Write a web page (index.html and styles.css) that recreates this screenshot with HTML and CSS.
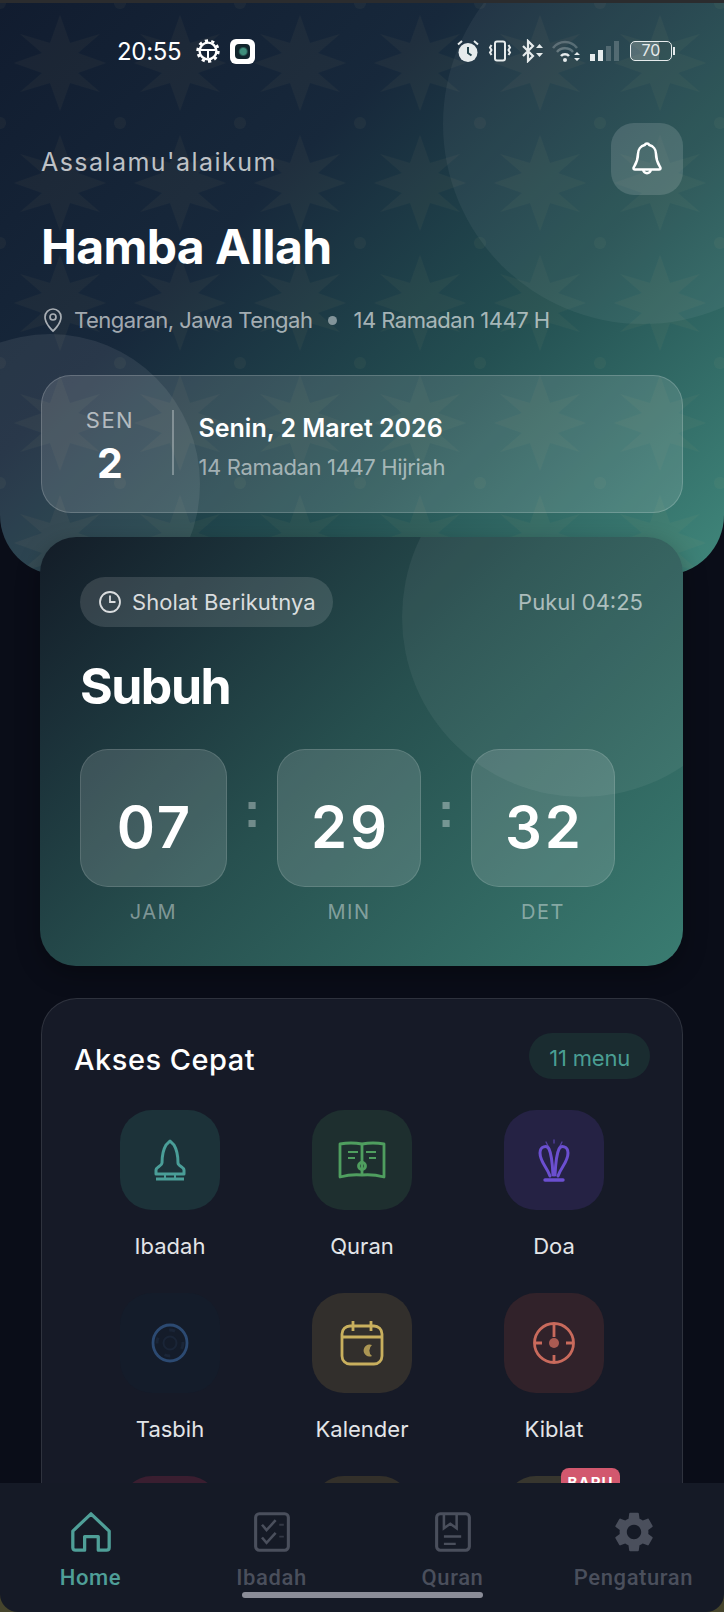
FILE: index.html
```html
<!DOCTYPE html>
<html lang="id">
<head>
  <meta charset="UTF-8">
  <meta name="viewport" content="width=device-width, initial-scale=1.0">
  <title>Hamba Allah</title>
  <link rel="stylesheet" href="styles.css">
</head>
<body>
  <div class="phone">
    <div class="top-strip"></div>

    <header class="header">
      <!-- star pattern + big soft circles -->
      <svg class="pattern" width="724" height="572" aria-hidden="true">
        <defs>
          <pattern id="stars" width="120" height="120" patternUnits="userSpaceOnUse">
            <path transform="translate(60 60)" d="M0 -48L10 -20L40 -29L18 -10L46 0L18 10L40 29L10 20L0 48L-10 20L-40 29L-18 10L-46 0L-18 -10L-40 -29L-10 -20Z"/>
            <circle cx="0" cy="0" r="6"/><circle cx="120" cy="0" r="6"/>
            <circle cx="0" cy="120" r="6"/><circle cx="120" cy="120" r="6"/>
          </pattern>
        </defs>
        <rect width="724" height="572" fill="url(#stars)"/>
      </svg>
      <div class="blob blob-right"></div>
      <div class="blob blob-left"></div>

      <div class="status-bar">
        <div class="status-left">
          <span class="status-time">20:55</span>
          <svg class="gear-face" width="24" height="24" viewBox="0 0 24 24" fill="none" stroke="#fff">
            <circle cx="12" cy="12" r="8.4" stroke-width="2.4"/>
            <circle cx="12" cy="12" r="10.4" stroke-width="2.6" stroke-dasharray="3.2 3.3"/>
            <path d="M5 11H19M12 11V19" stroke-width="2"/>
          </svg>
          <span class="app-badge"><span class="app-badge-inner"></span></span>
        </div>
        <div class="status-right">
          <svg width="24" height="24" viewBox="0 0 24 24">
            <circle cx="12" cy="13.5" r="9.5" fill="#e6ebec"/>
            <path d="M12 8V14L15.5 16.5" stroke="#24434b" stroke-width="2" fill="none"/>
            <path d="M2 5.5L6 2M22 5.5L18 2" stroke="#e6ebec" stroke-width="2"/>
          </svg>
          <svg width="24" height="22" viewBox="0 0 24 22" fill="none" stroke="#e6ebec" stroke-width="2">
            <rect x="7" y="1.5" width="10" height="19" rx="2"/>
            <path d="M3.5 5L2 7.500L3.500 10L2 12.500L3.500 15M20.500 5L22 7.500L20.500 10L22 12.500L20.500 15"/>
          </svg>
          <svg width="24" height="24" viewBox="0 0 24 24" fill="none" stroke="#e6ebec" stroke-width="2.200">
            <path d="M3 7L13 17L8 22V2L13 7L3 17"/>
            <path d="M16 9L19.500 5L23 9ZM16 14L19.500 18L23 14Z" fill="#e6ebec" stroke="none"/>
          </svg>
          <svg class="wifi" width="30" height="22" viewBox="0 0 30 22" fill="none">
            <path d="M1 8C7 0 19 0 25 8" stroke="#e6ebec" stroke-opacity=".25" stroke-width="2.500"/>
            <path d="M5 12C9 7 17 7 21 12" stroke="#e6ebec" stroke-opacity=".3" stroke-width="2.500"/>
            <path d="M9 16C11 13.500 15 13.500 17 16" stroke="#e6ebec" stroke-width="2.500"/>
            <circle cx="13" cy="20" r="2" fill="#e6ebec"/>
            <path d="M22 15L25 12L28 15ZM22 18L25 21L28 18Z" fill="#e6ebec"/>
          </svg>
          <div class="signal">
            <span class="bar bar-1"></span><span class="bar bar-2"></span>
            <span class="bar bar-3 off"></span><span class="bar bar-4 off"></span>
          </div>
          <div class="battery"><span class="battery-body">70</span><span class="battery-nub"></span></div>
        </div>
      </div>

      <div class="greet-row">
        <div class="greet-text">
          <div class="greeting">Assalamu'alaikum</div>
          <h1 class="name">Hamba Allah</h1>
          <div class="location">
            <svg width="24" height="26" viewBox="0 0 24 26" fill="none" stroke="currentColor" stroke-width="1.700">
              <path d="M20 10c0 7-8 14-8 14s-8-7-8-14a8 8 0 0 1 16 0Z"/>
              <circle cx="12" cy="10" r="3"/>
            </svg>
            <span>Tengaran, Jawa Tengah</span>
            <span class="loc-dot"></span>
            <span>14 Ramadan 1447 H</span>
          </div>
        </div>
        <button class="bell-btn" aria-label="Notifikasi">
          <svg width="36" height="38" viewBox="0 0 24 25" fill="none" stroke="#fff" stroke-width="1.700" stroke-linejoin="round">
            <path d="M6 9a6 6 0 0 1 4.500-5.800a1.600 1.600 0 0 1 3 0A6 6 0 0 1 18 9c0 6 3 8.500 3 9.500a1 1 0 0 1-1 1H4a1 1 0 0 1-1-1c0-1 3-3.500 3-9.500Z"/>
            <path d="M9.500 19.500a2.500 2.500 0 0 0 5 0"/>
          </svg>
        </button>
      </div>

      <div class="date-card">
        <div class="date-day">
          <div class="date-dow">SEN</div>
          <div class="date-num">2</div>
        </div>
        <div class="date-line"></div>
        <div class="date-info">
          <div class="date-main">Senin, 2 Maret 2026</div>
          <div class="date-sub">14 Ramadan 1447 Hijriah</div>
        </div>
      </div>
    </header>

    <section class="prayer-card">
      <div class="blob blob-prayer"></div>
      <div class="prayer-top">
        <div class="next-pill">
          <svg width="24" height="24" viewBox="0 0 24 24" fill="none" stroke="currentColor" stroke-width="1.800">
            <circle cx="12" cy="12" r="10"/>
            <path d="M12 5.500V12H17.500"/>
          </svg>
          <span>Sholat Berikutnya</span>
        </div>
        <div class="prayer-time">Pukul 04:25</div>
      </div>
      <div class="prayer-name">Subuh</div>
      <div class="countdown">
        <div class="unit unit-wide">
          <div class="unit-box">07</div>
          <div class="unit-label">JAM</div>
        </div>
        <div class="colon">:</div>
        <div class="unit">
          <div class="unit-box">29</div>
          <div class="unit-label">MIN</div>
        </div>
        <div class="colon">:</div>
        <div class="unit">
          <div class="unit-box">32</div>
          <div class="unit-label">DET</div>
        </div>
      </div>
    </section>

    <section class="quick-card">
      <div class="quick-head">
        <h2 class="quick-title">Akses Cepat</h2>
        <span class="quick-count">11 menu</span>
      </div>
      <div class="menu-grid">
        <div class="menu-item">
          <div class="menu-icon tile-teal">
            <svg width="32" height="43" viewBox="0 0 32 43" fill="none" stroke="#4a9e98" stroke-width="3" stroke-linejoin="round">
              <path d="M16 2L20 6C23 11 24 17 24 24C24 27 30 28 30 31V35H2V31C2 28 8 27 8 24C8 17 9 11 12 6Z"/>
              <path d="M2 40H30"/>
              <path d="M11 35V40M21 35V40" stroke-width="2"/>
            </svg>
          </div>
          <div class="menu-label">Ibadah</div>
        </div>
        <div class="menu-item">
          <div class="menu-icon tile-green">
            <svg width="48" height="38" viewBox="0 0 48 38" fill="none" stroke="#4f9e5f" stroke-width="2.800" stroke-linejoin="round">
              <path d="M2 3Q13 1 24 3Q35 1 46 3V36Q35 33 24 34Q13 33 2 36Z"/>
              <path d="M24 3V34"/>
              <path d="M10 11H20M10 17H17M28 11H38M31 17H38" stroke-width="2"/>
              <circle cx="24" cy="25" r="3.500"/>
            </svg>
          </div>
          <div class="menu-label">Quran</div>
        </div>
        <div class="menu-item">
          <div class="menu-icon tile-purple">
            <svg width="32" height="43" viewBox="0 0 32 43" fill="none" stroke="#6b4fd0" stroke-width="3" stroke-linecap="round">
              <path d="M12 37C9 28 2 23 2 14C2 7 9 6 11 10C14 16 14.500 27 15 36"/>
              <path d="M20 37C23 28 30 23 30 14C30 7 23 6 21 10C18 16 17.500 27 17 36"/>
              <path d="M7 41H25" stroke-width="3.400"/>
              <path d="M16 1V4M8 3L10 7M24 3L22 7" stroke-width="1.300" stroke-opacity=".7"/>
            </svg>
          </div>
          <div class="menu-label">Doa</div>
        </div>

        <div class="menu-item">
          <div class="menu-icon tile-blue">
            <svg width="38" height="40" viewBox="0 0 38 40" fill="none">
              <ellipse cx="19" cy="20" rx="17" ry="18" stroke="#2c4a72" stroke-width="2.800"/>
              <circle cx="19" cy="20" r="6.500" stroke="#1a2537" stroke-width="2"/>
              <circle cx="19" cy="20" r="13" stroke="#1a2537" stroke-width="3" stroke-dasharray="6 14"/>
            </svg>
          </div>
          <div class="menu-label">Tasbih</div>
        </div>
        <div class="menu-item">
          <div class="menu-icon tile-gold">
            <svg width="44" height="46" viewBox="0 0 44 46" fill="none" stroke="#c9b05e" stroke-width="2.800">
              <rect x="2" y="6" width="40" height="38" rx="8"/>
              <path d="M2 17H42M13 1V11M31 1V11"/>
              <path d="M32 25a6 6 0 1 0 0 11a7 7 0 0 1 0-11Z" fill="#c9b05e" fill-opacity=".8" stroke="none"/>
            </svg>
          </div>
          <div class="menu-label">Kalender</div>
        </div>
        <div class="menu-item">
          <div class="menu-icon tile-red">
            <svg width="44" height="44" viewBox="0 0 44 44" fill="none" stroke="#c96a5c" stroke-width="2.800">
              <circle cx="22" cy="22" r="19.500"/>
              <path d="M22 2V16M22 34V42M2 22H10M34 22H42"/>
              <circle cx="22" cy="22" r="5" fill="#c96a5c" fill-opacity=".8" stroke="none"/>
            </svg>
          </div>
          <div class="menu-label">Kiblat</div>
        </div>

        <div class="menu-item">
          <div class="menu-icon tile-rose"></div>
          <div class="menu-label"></div>
        </div>
        <div class="menu-item">
          <div class="menu-icon tile-olive"></div>
          <div class="menu-label"></div>
        </div>
        <div class="menu-item">
          <div class="menu-icon tile-sand"><span class="new-badge">BARU</span></div>
          <div class="menu-label"></div>
        </div>
      </div>
    </section>

    <nav class="bottom-nav">
      <div class="nav-item active">
        <svg width="44" height="44" viewBox="0 0 44 44" fill="none" stroke="currentColor" stroke-width="3.600" stroke-linejoin="round">
          <path d="M2 21L22 2L42 21V39Q42 42 39 42H30V27H15V42H5Q2 42 2 39Z"/>
        </svg>
        <span>Home</span>
      </div>
      <div class="nav-item">
        <svg width="40" height="44" viewBox="0 0 40 44" fill="none" stroke="currentColor" stroke-width="3.400">
          <rect x="2" y="2" width="36" height="40" rx="4"/>
          <path d="M9 14L14 20L24 9M9 28L14 34L24 23" stroke-width="2.800"/>
          <path d="M28 14H33M28 27H33" stroke-width="2" stroke-opacity=".6"/>
        </svg>
        <span>Ibadah</span>
      </div>
      <div class="nav-item">
        <svg width="40" height="44" viewBox="0 0 40 44" fill="none" stroke="currentColor" stroke-width="3.400">
          <rect x="2" y="2" width="36" height="40" rx="4"/>
          <path d="M10 2V18L17 13L24 18V2" stroke-width="2.800"/>
          <path d="M10 27H29M10 35H23" stroke-width="2.600"/>
        </svg>
        <span>Quran</span>
      </div>
      <div class="nav-item">
        <svg class="nav-gear" width="52" height="52" viewBox="0 0 24 24" fill="currentColor">
          <path d="M19.14 12.94c.04-.3.06-.61.06-.94 0-.32-.02-.64-.07-.94l2.030-1.580c.18-.14.23-.41.12-.61l-1.920-3.320c-.12-.22-.37-.29-.59-.22l-2.390.96c-.5-.38-1.030-.7-1.620-.94l-.36-2.540c-.04-.24-.24-.41-.48-.41h-3.840c-.24 0-.43.17-.47.41l-.36 2.540c-.59.24-1.130.57-1.620.94l-2.390-.96c-.22-.08-.47 0-.59.22L2.740 8.870c-.12.21-.08.47.12.61l2.030 1.580c-.05.3-.09.63-.09.94s.02.64.07.94l-2.030 1.580c-.18.14-.23.41-.12.61l1.920 3.320c.12.22.37.29.59.22l2.390-.96c.5.38 1.030.7 1.620.94l.36 2.540c.05.24.24.41.48.41h3.840c.24 0 .44-.17.47-.41l.36-2.540c.59-.24 1.130-.56 1.620-.94l2.390.96c.22.08.47 0 .59-.22l1.920-3.320c.12-.22.07-.47-.12-.61l-2.010-1.580zM12 15.600c-1.980 0-3.600-1.620-3.600-3.600s1.620-3.600 3.600-3.600 3.600 1.620 3.600 3.600-1.620 3.600-3.600 3.600z"/>
        </svg>
        <span>Pengaturan</span>
      </div>
      <div class="home-bar"></div>
    </nav>
  </div>
</body>
</html>
```

FILE: styles.css
```css
* {
  margin: 0;
  padding: 0;
  box-sizing: border-box;
}

body {
  background-color: #0a0d18;
  font-family: Inter, "Noto Sans", sans-serif;
  color: #fff;
}

.phone {
  position: relative;
  width: 724px;
  height: 1612px;
  overflow: hidden;
  background: linear-gradient(#0a0d18 1590px, #45442c 1590px);
}

.top-strip {
  height: 3px;
  background-color: #2b2c2e;
}

/* Header */
.header {
  position: relative;
  height: 572px;
  padding: 36px 41px 0;
  overflow: hidden;
  border-radius: 0 0 60px 60px;
  background: linear-gradient(135deg, #111c2f 0%, #17283b 35%, #245052 65%, #40877b 100%);
}

.pattern {
  position: absolute;
  top: 0;
  left: 0;
}

.pattern path,
.pattern circle {
  fill: #c9b37a;
  fill-opacity: .05;
}

.blob {
  position: absolute;
  border-radius: 50%;
  background-color: rgba(255, 255, 255, .05);
}

.blob-right {
  top: -79px;
  left: 443px;
  width: 400px;
  height: 400px;
}

.blob-left {
  top: 331px;
  left: -100px;
  width: 300px;
  height: 300px;
  background-color: rgba(255, 255, 255, .08);
}

/* Status bar */
.status-bar {
  position: relative;
  display: flex;
  justify-content: space-between;
  align-items: center;
  height: 24px;
  padding: 0 8px 0 76px;
}

.status-left {
  display: flex;
  align-items: center;
}

.status-time {
  font-size: 24px;
  letter-spacing: -.3px;
  color: #fff;
}

.gear-face {
  margin-left: 15px;
}

.app-badge {
  display: flex;
  align-items: center;
  justify-content: center;
  width: 25px;
  height: 25px;
  margin-left: 10px;
  border-radius: 6px;
  background-color: #fff;
}

.app-badge-inner {
  width: 15px;
  height: 15px;
  border-radius: 4px;
  background: radial-gradient(circle at 55% 50%, #3f8f7c 0 3px, #10242c 5px);
}

.status-right {
  display: flex;
  align-items: center;
  gap: 8px;
}

.signal {
  display: flex;
  align-items: flex-end;
  gap: 3px;
  height: 20px;
}

.bar {
  width: 5px;
  background-color: #e6ebec;
}

.bar-1 { height: 7px; }
.bar-2 { height: 11px; }
.bar-3 { height: 15px; }
.bar-4 { height: 20px; }

.bar.off {
  opacity: .22;
}

.battery {
  display: flex;
  align-items: center;
  gap: 1px;
  margin-left: 3px;
}

.battery-body {
  width: 42px;
  height: 20px;
  border: 1.5px solid #e6ebec;
  border-radius: 5px;
  background: linear-gradient(90deg, rgba(255, 255, 255, .2) 70%, transparent 70%);
  font-size: 16px;
  line-height: 17px;
  text-align: center;
  color: #e6ebec;
}

.battery-nub {
  width: 2px;
  height: 8px;
  background-color: #e6ebec;
}

/* Greeting */
.greet-row {
  position: relative;
  display: flex;
  justify-content: space-between;
  align-items: flex-start;
  margin-top: 60px;
}

.greet-text {
  padding-top: 24px;
}

.greeting {
  font-size: 25px;
  line-height: 30px;
  letter-spacing: 1.45px;
  color: rgba(255, 255, 255, .72);
}

.name {
  margin-top: 40px;
  font-size: 48px;
  line-height: 60px;
  font-weight: 700;
  letter-spacing: -.6px;
}

.location {
  display: flex;
  align-items: center;
  margin-top: 28px;
  font-size: 22px;
  line-height: 30px;
  letter-spacing: -.5px;
  color: rgba(255, 255, 255, .62);
}

.location svg {
  margin-right: 9px;
}

.loc-dot {
  width: 9px;
  height: 9px;
  margin: 0 16px;
  border-radius: 50%;
  background-color: rgba(255, 255, 255, .45);
}

.bell-btn {
  flex-shrink: 0;
  display: flex;
  align-items: center;
  justify-content: center;
  width: 72px;
  height: 72px;
  border: 0;
  border-radius: 23px;
  background-color: rgba(255, 255, 255, .14);
}

/* Date card */
.date-card {
  position: relative;
  display: flex;
  align-items: flex-start;
  height: 138px;
  margin-top: 40px;
  padding: 31px 0 0 6px;
  border: 1.5px solid rgba(255, 255, 255, .18);
  border-radius: 30px;
  background-color: rgba(255, 255, 255, .12);
}

.date-day {
  width: 124px;
  text-align: center;
}

.date-dow {
  font-size: 22px;
  line-height: 26px;
  letter-spacing: 1.5px;
  color: rgba(255, 255, 255, .6);
}

.date-num {
  margin-top: 5px;
  font-size: 41px;
  line-height: 50px;
  font-weight: 700;
}

.date-line {
  width: 1.5px;
  height: 65px;
  margin: 3px 25px 0 0;
  background-color: rgba(255, 255, 255, .3);
}

.date-info {
  margin-top: 4px;
}

.date-main {
  font-size: 25px;
  line-height: 34px;
  font-weight: 600;
}

.date-sub {
  margin-top: 7px;
  font-size: 22px;
  line-height: 30px;
  letter-spacing: -.35px;
  color: rgba(255, 255, 255, .55);
}

/* Next prayer */
.prayer-card {
  position: relative;
  height: 429px;
  margin: -38px 41px 0 40px;
  padding: 40px 40px 0;
  overflow: hidden;
  border-radius: 36px;
  background: linear-gradient(135deg, #131c27 0%, #1b3139 20%, #27504f 48%, #3a7c71 100%);
  box-shadow: 0 8px 24px rgba(0, 0, 0, .3);
}

.blob-prayer {
  top: -100px;
  left: 362px;
  width: 360px;
  height: 360px;
  background-color: rgba(255, 255, 255, .055);
}

.prayer-top {
  position: relative;
  display: flex;
  justify-content: space-between;
  align-items: center;
}

.next-pill {
  display: flex;
  align-items: center;
  gap: 10px;
  height: 50px;
  padding: 0 17px 0 18px;
  border-radius: 25px;
  background-color: rgba(255, 255, 255, .13);
  font-size: 22px;
  letter-spacing: .1px;
  color: rgba(255, 255, 255, .82);
}

.prayer-time {
  font-size: 22px;
  color: rgba(255, 255, 255, .6);
}

.prayer-name {
  position: relative;
  margin-top: 29px;
  font-size: 50px;
  line-height: 60px;
  font-weight: 700;
  letter-spacing: -1.5px;
}

.countdown {
  position: relative;
  display: flex;
  align-items: flex-start;
  margin-top: 33px;
}

.unit {
  width: 144px;
  text-align: center;
}

.unit-wide {
  width: 147px;
}

.unit-box {
  height: 138px;
  border: 1.5px solid rgba(255, 255, 255, .13);
  border-radius: 28px;
  background-color: rgba(255, 255, 255, .14);
  font-size: 58px;
  line-height: 154px;
  font-weight: 600;
  letter-spacing: 3px;
  padding-left: 3px;
}

.unit-label {
  margin-top: 13px;
  font-size: 20px;
  line-height: 24px;
  letter-spacing: 1.5px;
  color: rgba(255, 255, 255, .42);
}

.colon {
  width: 50px;
  font-family: "Liberation Sans", sans-serif;
  font-size: 50px;
  line-height: 122px;
  font-weight: 700;
  text-align: center;
  color: rgba(255, 255, 255, .35);
}

/* Quick access */
.quick-card {
  height: 600px;
  margin: 32px 41px 0;
  padding: 34px 32px 0;
  border: 1.5px solid rgba(255, 255, 255, .11);
  border-radius: 36px;
  background-color: #161a27;
}

.quick-head {
  display: flex;
  justify-content: space-between;
  align-items: center;
  height: 46px;
}

.quick-title {
  margin-top: 6px;
  font-size: 29px;
  font-weight: 500;
  letter-spacing: .5px;
}

.quick-count {
  display: flex;
  align-items: center;
  height: 46px;
  padding: 3px 20px 0;
  border-radius: 23px;
  background-color: #1a2c30;
  font-size: 22px;
  letter-spacing: -.2px;
  color: #4a9e93;
}

.menu-grid {
  display: grid;
  grid-template-columns: repeat(3, 192px);
  row-gap: 33px;
  margin-top: 31px;
}

.menu-item {
  display: flex;
  flex-direction: column;
  align-items: center;
}

.menu-icon {
  position: relative;
  display: flex;
  align-items: center;
  justify-content: center;
  width: 100px;
  height: 100px;
  border-radius: 32px;
}

.menu-label {
  height: 28px;
  margin-top: 22px;
  font-size: 22px;
  line-height: 28px;
  color: #e3e5e8;
}

.tile-teal { background-color: #1c3239; }
.tile-green { background-color: #1e2f2f; }
.tile-purple { background-color: #252244; }
.tile-blue { background-color: #141c2a; }
.tile-gold { background-color: #322f2c; }
.tile-red { background-color: #31222a; }
.tile-rose { background-color: #3a1e30; }
.tile-olive { background-color: #33302a; }
.tile-sand { background-color: #37362e; }

.new-badge {
  position: absolute;
  top: -8px;
  right: -16px;
  width: 59px;
  height: 30px;
  border-radius: 8px;
  background-color: #d2586e;
  font-size: 15px;
  line-height: 29px;
  font-weight: 700;
  letter-spacing: 1px;
  text-align: center;
  color: #fff;
}

/* Bottom nav */
.bottom-nav {
  position: absolute;
  left: 0;
  bottom: 0;
  display: grid;
  grid-template-columns: 181px 181px 181px 181px;
  width: 724px;
  height: 129px;
  padding-top: 29px;
  border-radius: 0 0 18px 18px;
  background-color: #151a26;
}

.nav-item {
  display: flex;
  flex-direction: column;
  align-items: center;
  height: 80px;
  font-family: Roboto, sans-serif;
  font-size: 22px;
  font-weight: 500;
  line-height: 28px;
  letter-spacing: .6px;
  color: #4a4f5c;
}

.nav-item svg {
  height: 44px;
  margin-bottom: 12px;
}

.nav-item .nav-gear {
  height: 52px;
  margin: -4px 0 8px;
}

.nav-item.active {
  color: #4f9f98;
}

.home-bar {
  position: absolute;
  left: 242px;
  bottom: 14px;
  width: 241px;
  height: 6px;
  border-radius: 3px;
  background-color: #8b8d98;
}
```
